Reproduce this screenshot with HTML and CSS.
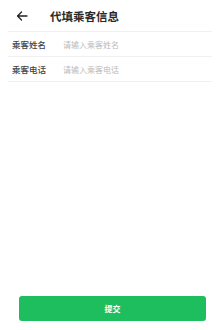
FILE: index.html
```html
<!DOCTYPE html>
<html lang="zh-CN">
<head>
  <meta charset="UTF-8" />
  <meta name="viewport" content="width=device-width, initial-scale=1.0"/>
  <title>代填乘客信息</title>
  <link rel="stylesheet" href="styles.css">
</head>
<body>

<div class="page">
  <div class="header">
    <svg class="back" width="12" height="12" viewBox="0 0 12 12">
      <path d="M11 6H1.5M5.5 2L1.5 6l4 4" fill="none" stroke="#222" stroke-width="1.3" stroke-linecap="round" stroke-linejoin="round"/>
    </svg>
    <h1>代填乘客信息</h1>
  </div>

  <div class="form">
    <div class="row">
      <label>乘客姓名</label>
      <input type="text" placeholder="请输入乘客姓名" />
    </div>
    <div class="row">
      <label>乘客电话</label>
      <input type="text" placeholder="请输入乘客电话" />
    </div>
  </div>

  <div class="spacer"></div>

  <div class="footer">
    <button class="btn-submit">提交</button>
  </div>
</div>

</body>
</html>
```

FILE: styles.css
```css
body {
  margin: 0;
  font-family: "Noto Sans CJK SC", "Noto Sans", sans-serif;
  background: #fff;
}
.page {
  display: flex;
  flex-direction: column;
  height: 330px;
}
.header {
  display: flex;
  align-items: center;
  height: 31px;
  padding-left: 16px;
}
.back {
  margin-right: 22px;
}
h1 {
  margin: 0;
  font-size: 11.5px;
  font-weight: 700;
  color: #2a2a2a;
}
.form {
  margin: 0 8px;
  border-top: 1px solid #f0f0f0;
}
.row {
  display: flex;
  align-items: center;
  height: 24px;
  padding-left: 4px;
  border-bottom: 1px solid #f0f0f0;
}
.row label {
  width: 51px;
  font-size: 8.5px;
  font-weight: 500;
  color: #444;
}
.row input {
  flex: 1;
  border: none;
  outline: none;
  padding: 0;
  font-family: inherit;
  font-size: 8px;
  background: transparent;
}
.row input::placeholder {
  color: #bbb;
}
.spacer {
  flex: 1;
}
.footer {
  padding: 0 14px 9px 19px;
}
.btn-submit {
  width: 100%;
  height: 25px;
  border: none;
  border-radius: 3px;
  background: #1ebe5e;
  color: #fff;
  font-family: inherit;
  font-size: 8px;
  font-weight: 700;
}
```
